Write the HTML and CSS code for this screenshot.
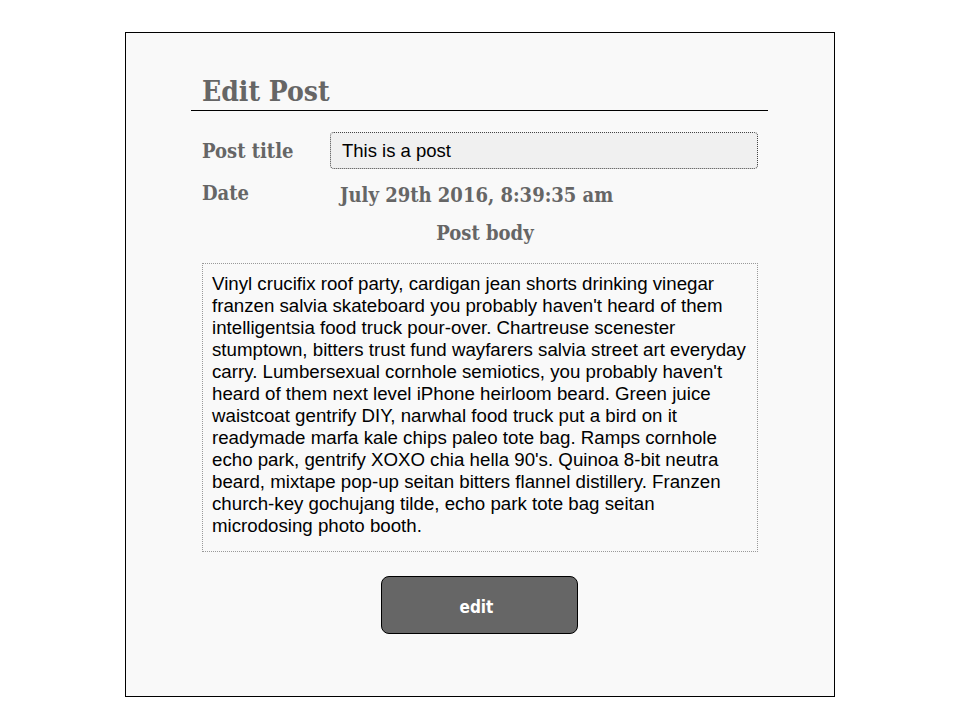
FILE: index.html
```html
<!DOCTYPE html>
<html>
<head>
<meta charset="utf-8">
<link rel="stylesheet" href="styles.css">
</head>
<body>
<div class="card">
  <h1 class="title">Edit Post</h1>
  <div class="form">
    <div class="row">
      <label class="label">Post title</label>
      <div class="input">This is a post</div>
    </div>
    <div class="row row-date">
      <span class="label">Date</span>
      <span class="date">July 29th 2016, 8:39:35 am</span>
    </div>
    <div class="body-label">Post body</div>
    <div class="body-text">Vinyl crucifix roof party, cardigan jean shorts drinking vinegar franzen salvia skateboard you probably haven't heard of them intelligentsia food truck pour-over. Chartreuse scenester stumptown, bitters trust fund wayfarers salvia street art everyday carry. Lumbersexual cornhole semiotics, you probably haven't heard of them next level iPhone heirloom beard. Green juice waistcoat gentrify DIY, narwhal food truck put a bird on it readymade marfa kale chips paleo tote bag. Ramps cornhole echo park, gentrify XOXO chia hella 90's. Quinoa 8-bit neutra beard, mixtape pop-up seitan bitters flannel distillery. Franzen church-key gochujang tilde, echo park tote bag seitan microdosing photo booth.</div>
    <div class="actions">
      <button class="btn">edit</button>
    </div>
  </div>
</div>
</body>
</html>
```

FILE: styles.css
```css
html, body {
  margin: 0;
  padding: 0;
  background: #ffffff;
}

.card {
  box-sizing: border-box;
  width: 710px;
  height: 665px;
  margin: 32px auto 0;
  border: 1px solid #000;
  background: #f9f9f9;
  padding: 40px 0 0 65px;
}

.title {
  box-sizing: border-box;
  width: 577px;
  margin: 0;
  padding: 0 0 0 11px;
  border-bottom: 1px solid #000;
  font-family: "DejaVu Serif Condensed", "DejaVu Serif", serif;
  font-weight: bold;
  font-size: 28px;
  line-height: 37px;
  color: #666;
}

.form {
  width: 556px;
  margin-left: 11px;
}

.row {
  display: grid;
  grid-template-columns: 128px 1fr;
  align-items: center;
  margin-top: 21px;
}

.row-date {
  margin-top: 12px;
  align-items: start;
}

.label {
  font-family: "DejaVu Serif Condensed", "DejaVu Serif", serif;
  font-weight: bold;
  font-size: 20px;
  color: #666;
}

.input {
  box-sizing: border-box;
  height: 37px;
  border: 1px dotted #444;
  border-radius: 4px;
  background: #f0f0f0;
  padding: 0 11px;
  display: flex;
  align-items: center;
  font-family: "Liberation Sans", Arial, sans-serif;
  font-size: 18.5px;
  color: #000;
}

.date {
  padding-left: 10px;
  padding-top: 2px;
  font-family: "DejaVu Serif Condensed", "DejaVu Serif", serif;
  font-weight: bold;
  font-size: 20px;
  color: #666;
}

.body-label {
  text-align: center;
  margin-top: 14px;
  font-family: "DejaVu Serif Condensed", "DejaVu Serif", serif;
  font-weight: bold;
  font-size: 20px;
  color: #666;
  padding-left: 10px;
}

.body-text {
  box-sizing: border-box;
  margin-top: 18px;
  border: 1px dotted #999;
  padding: 9px 9px 14px 9px;
  font-family: "Liberation Sans", Arial, sans-serif;
  font-size: 18.7px;
  line-height: 22px;
  color: #000;
}

.actions {
  display: flex;
  justify-content: center;
  margin-top: 24px;
  padding-right: 1px;
}

.btn {
  box-sizing: border-box;
  width: 197px;
  height: 58px;
  padding: 3px 6px 0 0;
  border: 1px solid #000;
  border-radius: 8px;
  background: #666;
  color: #fff;
  font-family: "DejaVu Sans Condensed", "DejaVu Sans", sans-serif;
  font-weight: bold;
  font-size: 17px;
}
```
